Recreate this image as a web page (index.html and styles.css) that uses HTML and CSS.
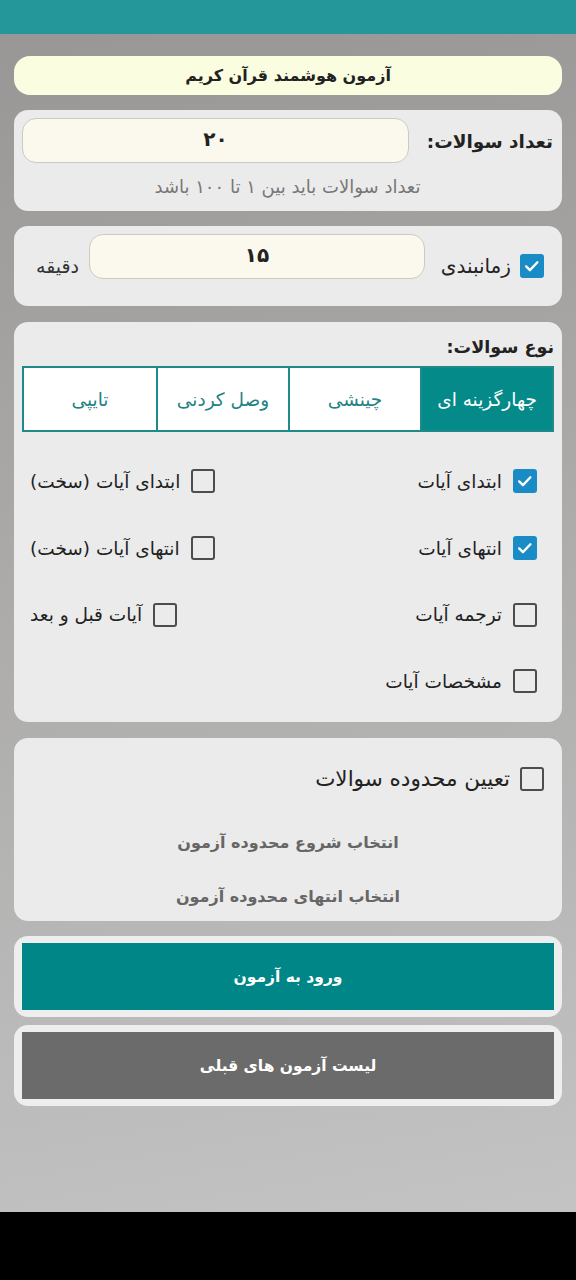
FILE: index.html
```html
<!DOCTYPE html>
<html lang="fa" dir="rtl">
<head>
<meta charset="utf-8">
<title>آزمون هوشمند قرآن کریم</title>
<link rel="stylesheet" href="styles.css">
</head>
<body>
<div class="screen">
  <header class="appbar"></header>
  <main class="content">
    <div class="title-card">آزمون هوشمند قرآن کریم</div>

    <section class="card count-card">
      <div class="count-row">
        <div class="count-label">تعداد سوالات:</div>
        <div class="field">۲۰</div>
      </div>
      <div class="hint">تعداد سوالات باید بین ۱ تا ۱۰۰ باشد</div>
    </section>

    <section class="card timer-card">
      <span class="cb checked"><svg viewBox="0 0 24 24"><path d="M5 12.5l4.5 4.5 9-9.5" fill="none" stroke="#fff" stroke-width="2.8" stroke-linecap="round" stroke-linejoin="round"/></svg></span>
      <span class="timer-label">زمانبندی</span>
      <div class="field timer-field">۱۵</div>
      <span class="unit">دقیقه</span>
    </section>

    <section class="card type-card">
      <div class="type-title">نوع سوالات:</div>
      <div class="tabs">
        <div class="tab active">چهارگزینه ای</div>
        <div class="tab">چینشی</div>
        <div class="tab">وصل کردنی</div>
        <div class="tab">تایپی</div>
      </div>
      <div class="opts">
        <div class="opt-row">
          <label class="opt"><span class="cb checked"><svg viewBox="0 0 24 24"><path d="M5 12.5l4.5 4.5 9-9.5" fill="none" stroke="#fff" stroke-width="2.8" stroke-linecap="round" stroke-linejoin="round"/></svg></span>ابتدای آیات</label>
          <label class="opt"><span class="cb"></span>ابتدای آیات (سخت)</label>
        </div>
        <div class="opt-row">
          <label class="opt"><span class="cb checked"><svg viewBox="0 0 24 24"><path d="M5 12.5l4.5 4.5 9-9.5" fill="none" stroke="#fff" stroke-width="2.8" stroke-linecap="round" stroke-linejoin="round"/></svg></span>انتهای آیات</label>
          <label class="opt"><span class="cb"></span>انتهای آیات (سخت)</label>
        </div>
        <div class="opt-row">
          <label class="opt"><span class="cb"></span>ترجمه آیات</label>
          <label class="opt"><span class="cb"></span>آیات قبل و بعد</label>
        </div>
        <div class="opt-row">
          <label class="opt"><span class="cb"></span>مشخصات آیات</label>
        </div>
      </div>
    </section>

    <section class="card range-card">
      <label class="range-check"><span class="cb"></span>تعیین محدوده سوالات</label>
      <div class="range-link first">انتخاب شروع محدوده آزمون</div>
      <div class="range-link">انتخاب انتهای محدوده آزمون</div>
    </section>

    <div class="btn-wrap"><div class="btn primary">ورود به آزمون</div></div>
    <div class="btn-wrap second"><div class="btn secondary">لیست آزمون های قبلی</div></div>
  </main>
  <footer class="navbar"></footer>
</div>
</body>
</html>
```
FILE: styles.css
```css
* { box-sizing: border-box; }
html, body { margin: 0; padding: 0; }
body {
  width: 576px;
  height: 1280px;
  font-family: "DejaVu Sans", "Noto Sans", sans-serif;
  direction: rtl;
  color: #222;
  overflow: hidden;
}
.screen { display: flex; flex-direction: column; height: 1280px; }
.appbar { height: 34px; background: #23979a; flex: none; }
.content {
  flex: 1;
  background: linear-gradient(170deg, #999795 0%, #aaa9a8 40%, #c3c3c3 100%);
  padding: 22px 14px 0;
  display: flex;
  flex-direction: column;
}
.navbar { height: 68px; background: #000; flex: none; }

.title-card {
  height: 39px;
  background: #fbfde1;
  border-radius: 16px;
  display: flex;
  align-items: center;
  justify-content: center;
  font-size: 16px;
  font-weight: bold;
  color: #222;
}
.card {
  background: #ebebeb;
  border-radius: 14px;
}
.count-card { margin-top: 15px; height: 101px; padding: 8px 9px 0 8px; }
.count-row { display: flex; align-items: center; gap: 18px; }
.count-label { font-size: 18.5px; font-weight: bold; color: #222; white-space: nowrap; padding-top: 2px; }
.field {
  height: 45px;
  background: #fbf8ee;
  border: 1.5px solid #cfcac0;
  border-radius: 14px;
  display: flex;
  align-items: center;
  justify-content: center;
  font-size: 20px;
  font-weight: bold;
  color: #222;
  padding-bottom: 4px;
}
.count-row .field { flex: 1; }
.hint { text-align: center; font-size: 18px; color: #777; margin-top: 13px; }

.timer-card {
  margin-top: 15px;
  height: 80px;
  display: flex;
  align-items: center;
  padding: 0 18px 0 22px;
}
.timer-label { font-size: 20px; color: #222; margin-right: 9px; }
.timer-field { align-self: flex-start; margin-top: 8px; flex: 1; margin-right: 16px; margin-left: 10px; }
.unit { font-size: 19px; color: #333; }

.cb {
  width: 24px;
  height: 24px;
  flex: none;
  border: 2.5px solid #4d4d4f;
  border-radius: 3px;
  display: inline-flex;
  align-items: center;
  justify-content: center;
}
.cb.checked { background: #1a8cc5; border-color: #1a8cc5; }
.cb svg { width: 22px; height: 22px; }

.type-card { margin-top: 16px; height: 400px; padding: 10px 8px 8px; }
.type-title { font-size: 17.5px; font-weight: bold; color: #222; height: 34px; line-height: 30px; }
.tabs {
  display: grid;
  grid-template-columns: repeat(4, 1fr);
  height: 66px;
  border: 2px solid #1e8a8a;
  background: #fff;
}
.tab {
  display: flex;
  align-items: center;
  justify-content: center;
  font-size: 18.5px;
  color: #1f8383;
  border-left: 2px solid #1e8a8a;
}
.tab:last-child { border-left: none; }
.tab.active { background: #058a8a; color: #fff; }
.opts { margin-top: 16px; padding: 0 17px 0 8px; }
.opt-row {
  height: 66.7px;
  display: flex;
  align-items: center;
  justify-content: space-between;
}
.opt { display: flex; align-items: center; gap: 11px; font-size: 18.5px; color: #222; }

.range-card { margin-top: 16px; height: 183px; padding: 28px 18px 0; }
.range-check { display: flex; align-items: center; gap: 10px; font-size: 21.5px; color: #222; }
.range-link { text-align: center; font-size: 16px; font-weight: bold; color: #666; }
.range-link.first { margin-top: 42px; }
.range-link + .range-link { margin-top: 35px; }

.btn-wrap {
  margin-top: 15px;
  height: 81px;
  background: #eeeeee;
  border-radius: 14px;
  padding: 7px 8px;
}
.btn-wrap.second { margin-top: 8px; }
.btn {
  height: 67px;
  display: flex;
  align-items: center;
  justify-content: center;
  color: #fff;
  font-size: 15.5px;
  font-weight: bold;
}
.btn.primary { background: #008686; }
.btn.secondary { background: #6b6b6b; }
```
